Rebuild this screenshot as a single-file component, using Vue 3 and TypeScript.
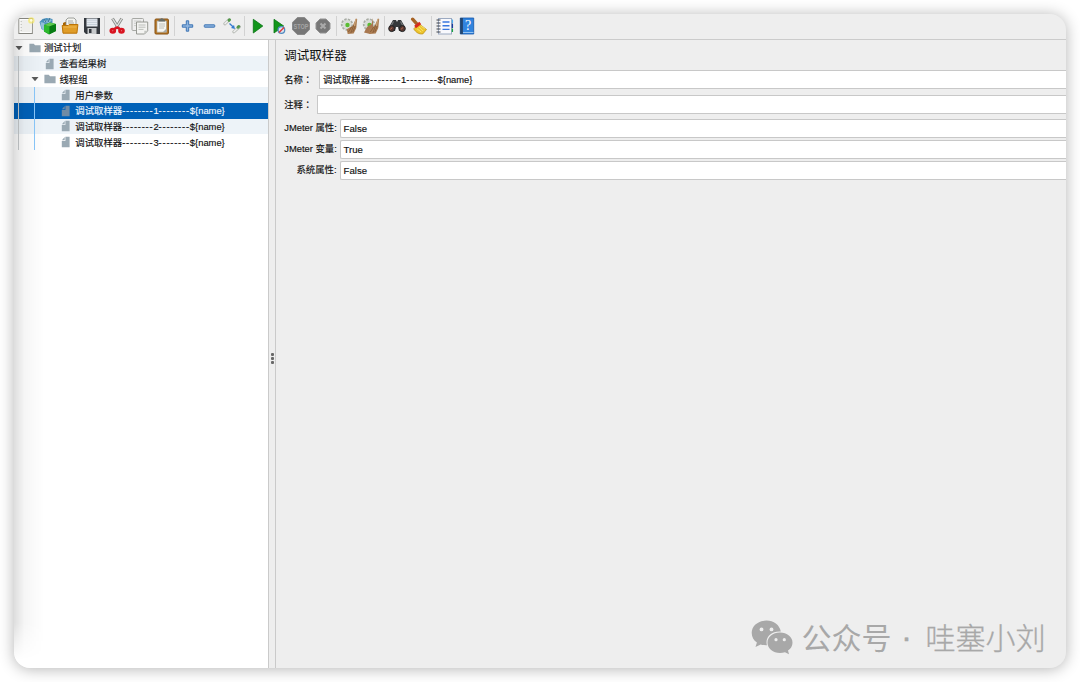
<script setup lang="ts">
interface TreeRow {
  level: number
  kind: 'folder' | 'file'
  label: string
  index?: number
  selected?: boolean
}

interface Field {
  label: string
  value: string
}

const toolbar: string[][] = [
  ['new', 'templates', 'open', 'save'],
  ['cut', 'copy', 'paste'],
  ['plus', 'minus', 'toggle'],
  ['start', 'startNoPause', 'stop', 'shutdown'],
  ['clear', 'clearAll'],
  ['search', 'broom'],
  ['functions', 'help'],
]

const rows: TreeRow[] = [
  { level: 0, kind: 'folder', label: '测试计划' },
  { level: 1, kind: 'file', label: '查看结果树' },
  { level: 1, kind: 'folder', label: '线程组' },
  { level: 2, kind: 'file', label: '用户参数' },
  { level: 2, kind: 'file', label: '调试取样器', index: 1, selected: true },
  { level: 2, kind: 'file', label: '调试取样器', index: 2 },
  { level: 2, kind: 'file', label: '调试取样器', index: 3 },
]

const options: Field[] = [
  { label: 'JMeter 属性:', value: 'False' },
  { label: 'JMeter 变量:', value: 'True' },
  { label: '系统属性:', value: 'False' },
]

const dashes = '--------'
const variable = '${name}'
</script>

<template>
  <main class="window">
    <header class="toolbar">
      <template v-for="(group, g) in toolbar" :key="g">
        <i v-if="g" class="sep"></i>
        <span v-for="name in group" :key="name" class="tool">
          <svg width="18" height="18" viewBox="0 0 18 18">
            <g v-if="name === 'new'">
              <rect x="1.9" y="1.5" width="13.4" height="15" fill="#eeeeec" stroke="#85857f" />
              <rect x="3" y="2.5" width="11.2" height="13" fill="none" stroke="#fff" stroke-width=".8" />
              <path d="M4.2 4v10" stroke="#b5b5b2" stroke-dasharray="1 2" />
              <circle cx="14.3" cy="3.4" r="3.2" fill="#f5e763" opacity=".7" />
              <circle cx="14.3" cy="3.4" r="1.3" fill="#fffce0" />
            </g>
            <g v-else-if="name === 'templates'">
              <path d="M.5 5l3-3 4-1 6 1v8l-6 5-5-3z" fill="#4c91bd" />
              <path d="M1.5 5l4 1v8l-3-3zM5 2l3 2 2-2 3 1-3 3-5-1z" fill="#92bfd8" />
              <path d="M5 2l2 3M11 1L9 5" stroke="#316c91" />
              <path d="M5 8l6-2.5L17 7v7l-7 3.5-5-3z" fill="#16941f" />
              <path d="M5 8l6-2.5L17 7l-6.5 2.5z" fill="#5fc74f" />
              <path d="M5 8l5.5 1.5v7.8l-5.5-3z" fill="#2cba2d" />
              <path d="M10.5 9.5L17 7v7l-6.5 3.3z" fill="#087c14" />
            </g>
            <g v-else-if="name === 'open'">
              <path d="M2 6l2-1h3l1 2h8v9H2z" fill="#a86300" />
              <path d="M5 9V3l2-2h6l2 2v8H5z" fill="#f3f3ef" stroke="#888b86" stroke-width=".8" />
              <path d="M7 4h5M7 6h6" stroke="#a8aaa5" />
              <path d="M1.2 8.5h6l1-1h8.7l-1 8.7H2z" fill="#e09d28" stroke="#bb7306" />
              <path d="M2.5 10h13" stroke="#efb851" />
            </g>
            <g v-else-if="name === 'save'">
              <path d="M1 1h16v16H3l-2-2z" fill="#34393f" />
              <rect x="3.5" y="1.5" width="11" height="8" fill="#e4eaf0" />
              <path d="M4 3.2h10M4 5.4h10M4 7.5h10" stroke="#b9c4cf" stroke-width=".7" />
              <rect x="4.5" y="11" width="9" height="6" fill="#c6c9cb" />
              <rect x="6" y="12" width="2.5" height="4" fill="#31363d" />
            </g>
            <g v-else-if="name === 'cut'">
              <path d="M3.5 1.5l6.2 10M12.8 1.5l-6.2 10" stroke="#878987" stroke-width="3" />
              <path d="M3.5 1.5l6.2 10M12.8 1.5l-6.2 10" stroke="#dfe1de" stroke-width="1.4" />
              <ellipse cx="3.8" cy="13.8" rx="2" ry="1.7" fill="none" stroke="#d91420" stroke-width="2.7" />
              <ellipse cx="12.5" cy="13.8" rx="2" ry="1.7" fill="none" stroke="#d91420" stroke-width="2.7" />
              <path d="M5 12.3l3.2-1.8 3.2 1.8" fill="none" stroke="#d91420" stroke-width="2.4" />
            </g>
            <g v-else-if="name === 'copy'">
              <rect x="1" y="1.5" width="11.5" height="12" rx="1" fill="#eee" stroke="#a6a8a4" />
              <path d="M3 4h7M3 6.3h7M3 8.6h7" stroke="#c3c5c1" stroke-width=".8" />
              <path d="M5.5 5h11.2v8.8l-3.2 3.2h-8z" fill="#f3f3f1" stroke="#969892" />
              <path d="M7.5 8h7M7.5 10.2h7M7.5 12.4h5" stroke="#b6b9b3" stroke-width=".9" />
              <path d="M13.3 17v-3.3h3.4z" fill="#c3c5c1" />
            </g>
            <g v-else-if="name === 'paste'">
              <rect x="2" y="2" width="13.4" height="15" rx="1" fill="#bc7b27" stroke="#855013" />
              <path d="M4 4h9.5v11.2H4z" fill="#f6f6f2" stroke="#9b9a90" stroke-width=".6" />
              <path d="M6 7h6M6 9h6M6 11h5" stroke="#b7b9b3" stroke-width=".9" />
              <path d="M5.5 4.5V2.7l2-.7c.3-1 2.3-1 2.6 0l2 .7v1.8z" fill="#686d68" />
              <path d="M10 15l3.5-3.5V15z" fill="#a8aaa5" />
            </g>
            <path v-else-if="name === 'plus'" d="M7.3 3.8h2.4v4h4v2.4h-4v4H7.3v-4h-4V7.8h4z" fill="#8db4df" stroke="#3e75b4" />
            <rect v-else-if="name === 'minus'" x="3.3" y="7.8" width="10.4" height="2.4" rx=".5" fill="#8db4df" stroke="#3e75b4" />
            <g v-else-if="name === 'toggle'">
              <path d="M1.8 6.8l4.2-4M10.8 14.8l5.6-5" stroke="#b7bbb5" stroke-width="3" stroke-linecap="round" />
              <path d="M2 6.6l4-3.8M11 14.6l5.2-4.6" stroke="#eee" stroke-width="1.5" stroke-linecap="round" />
              <path d="M6 3.3l.5-.5M15 10.2l.7-.7" stroke="#529849" stroke-width="3" stroke-linecap="round" />
              <path d="M6.5 6.6l4 3.7" stroke="#347bd1" stroke-width="1.3" />
              <path d="M12 12l-4-1 3-3z" fill="#347bd1" />
            </g>
            <path v-else-if="name === 'start'" d="M5.3 2.3L14.8 9l-9.5 7z" fill="#12961b" stroke="#087413" stroke-width=".8" />
            <g v-else-if="name === 'startNoPause'">
              <path d="M4 2.3L13.7 9 4 16z" fill="#12961b" stroke="#087413" stroke-width=".8" />
              <circle cx="11.4" cy="13" r="3.3" fill="#d9e5ef" stroke="#548bc1" stroke-width="1.3" />
              <path d="M9 15.5l5-5" stroke="#e0393c" stroke-width="1.5" />
            </g>
            <g v-else-if="name === 'stop'">
              <path d="M5.4.5h7.2l4.9 4.9v7.2l-4.9 4.9H5.4L.5 12.6V5.4z" fill="#777" stroke="#8a8a8a" />
              <text x="9" y="11.5" text-anchor="middle" textLength="15" lengthAdjust="spacingAndGlyphs" class="stop-text">STOP</text>
            </g>
            <g v-else-if="name === 'shutdown'">
              <path d="M6 2h6l4 4v6l-4 4H6l-4-4V6z" fill="#777" stroke="#929292" />
              <path d="M6.5 6.5l5 5M11.5 6.5l-5 5" stroke="#aaa" stroke-width="2.1" />
            </g>
            <g v-else-if="name === 'clear' || name === 'clearAll'">
              <circle cx="7" cy="7.5" r="4.8" fill="#d9dcd7" />
              <circle cx="7" cy="7.5" r="5.3" fill="none" stroke="#a9ada5" stroke-width="1.7" stroke-dasharray="2.4 1.2" />
              <circle cx="7.5" cy="8" r="2.2" fill="#59bd32" />
              <path v-if="name === 'clearAll'" d="M11 1l-1.5 6L5 10l-3 5.5 6 1.5 3-6z" fill="#a87850" />
              <path d="M15.9 1.5l1.3.5-.9 9-2.6 5.5-6 .4-1-4.7 6-3.4z" fill="#ac7d51" />
              <path d="M13.8 8l-3 8M11.7 10l-3.4 5M15.3 9l-2.5 6" stroke="#7d5330" stroke-width=".7" />
              <path d="M16 2l-1.7 7" stroke="#cda87d" />
            </g>
            <g v-else-if="name === 'search'">
              <path d="M5 3h3l1 2 1-2h3l4 7-1 4h-5l-1-4H8l-1 4H2l-1-4z" fill="#35383a" />
              <path d="M5.5 4.5L3 9M12.5 4.5L15 9" stroke="#74787a" stroke-width="1.2" />
              <circle cx="3.7" cy="11.6" r="3" fill="#583730" stroke="#202426" />
              <circle cx="14.3" cy="11.6" r="3" fill="#583730" stroke="#202426" />
              <path d="M2.5 12.5l1.5-2M13.2 12.5l1.5-2" stroke="#bd7355" />
            </g>
            <g v-else-if="name === 'broom'">
              <path d="M2.6 2.2l4.2 4.6" stroke="#a66324" stroke-width="3.3" stroke-linecap="round" />
              <path d="M8.7 6.5l7.8 6-3.6 4.4c-4 .6-7-1.6-9.2-5z" fill="#edc42c" stroke="#ba8c10" stroke-width=".7" />
              <path d="M4.2 8.8l5.2-4 1.8 2.4-5.3 4z" fill="#d72b1d" />
              <path d="M7.2 12l4 3M9.2 10l4 4M10.7 8.7l4 3" stroke="#f8e46d" />
            </g>
            <g v-else-if="name === 'functions'">
              <rect x="2.5" y="1.5" width="13" height="15.5" fill="#f8f9fd" stroke="#9caac1" />
              <path d="M.5 3h4M.5 6h4M.5 9h4M.5 12h4M.5 15h4" stroke="#3c4148" stroke-width="1.1" />
              <path d="M6.5 5h7M6.5 8.7h7M6.5 12.4h7" stroke="#3977de" stroke-width="1.4" />
              <path d="M16.4 2.5V6" stroke="#4aabed" stroke-width="1.3" />
              <path d="M16.4 6.5V11" stroke="#173b9d" stroke-width="1.3" />
              <path d="M16.4 11.5V15" stroke="#18a443" stroke-width="1.3" />
            </g>
            <g v-else>
              <path d="M2.3 1h13.4v16H2.3z" fill="#3184de" stroke="#1457aa" stroke-width=".8" />
              <path d="M2.2 1h2.7v16H2.2z" fill="#23466f" />
              <path d="M5 15.5h10.5" stroke="#95c3f1" />
              <text x="10.2" y="13" text-anchor="middle" class="help-text">?</text>
            </g>
          </svg>
        </span>
      </template>
    </header>

    <section class="content">
      <aside class="tree">
        <div v-for="(row, i) in rows" :key="i" class="tree-row" :class="[`level-${row.level}`, { striped: i % 2 === 1, selected: row.selected }]">
          <i v-if="i > 0" class="guide outer"></i>
          <i v-if="row.level === 2" class="guide inner"></i>
          <span class="arrow"><svg v-if="row.kind === 'folder'" width="8" height="6" viewBox="0 0 8 6"><path d="M.5 1h7L4 5.3z" fill="#5c5c5c" /></svg></span>
          <svg class="node-icon" width="12" height="12" viewBox="0 0 12 12">
            <path v-if="row.kind === 'folder'" d="M.4 1.7h4.3l1.4 1.6h5.5v7H.4z" />
            <path v-else d="M5.4.7h4.2v10.6H1.8V5h3.6zM4.7 1v3.3H1.9z" />
          </svg>
          <span class="node-label">{{ row.label }}<template v-if="row.index"><span class="dash">{{ dashes }}</span>{{ row.index }}<span class="dash">{{ dashes }}</span>{{ variable }}</template></span>
        </div>
        <i class="edge-shade"></i>
      </aside>
      <div class="divider"><i></i><i></i><i></i></div>
      <section class="panel">
        <h1>调试取样器</h1>
        <div class="text-row name-row">
          <label>名称<span class="colon" lang="zh-Hant">：</span></label>
          <div class="input">调试取样器<span class="dash">{{ dashes }}</span>1<span class="dash">{{ dashes }}</span>{{ variable }}</div>
        </div>
        <div class="text-row comment-row">
          <label>注释<span class="colon" lang="zh-Hant">：</span></label>
          <div class="input"></div>
        </div>
        <div v-for="option in options" :key="option.label" class="option-row">
          <label>{{ option.label }}</label>
          <div class="combo">{{ option.value }}</div>
        </div>
      </section>
    </section>
    <div class="watermark">
      <svg width="42" height="35" viewBox="0 0 42 35">
        <path d="M15.5.6C7 .6.7 6 .7 13c0 4 2 7.3 5.2 9.5l-1.4 4.6 5.2-2.7c2 .6 4 .9 6.2.8A12.5 12.5 0 0 1 15.5 22c0-6 5.6-10.6 12.8-10.6h1.5C28.5 5 22.7.6 15.5.6z" />
        <path d="M29 12.5c-7.2 0-12.5 4.5-12.5 10.2S22 33 29 33c1.8 0 3.4-.3 5-.8l4 2-1-3.6c2.8-1.9 4.5-4.7 4.5-7.9 0-5.7-5.5-10.2-12.5-10.2z" />
        <g fill="#eee"><circle cx="10.5" cy="9.4" r="1.9" /><circle cx="20.5" cy="9.4" r="1.9" /><circle cx="25" cy="19.7" r="1.6" /><circle cx="33.3" cy="19.7" r="1.6" /></g>
      </svg>
      <span class="account">公众号</span><span class="dot">·</span><span class="owner">哇塞小刘</span>
    </div>
  </main>
</template>

<style>
body {
  background: #fff;
  overflow: hidden;
}
#app {
  height: 682px;
  padding: 14px;
  box-sizing: border-box;
}
</style>

<style scoped>
.window {
  position: relative;
  display: flex;
  flex-direction: column;
  width: 1052px;
  height: 654px;
  overflow: hidden;
  border-radius: 16px;
  background: #eee;
  box-shadow: 0 1px 15px rgba(0, 0, 0, 0.3);
  color: #101010;
  font-family: "Liberation Sans", "Noto Sans CJK SC", sans-serif;
  font-size: 9.4px;
}
.toolbar {
  display: flex;
  flex: none;
  height: 23px;
  padding: 0 0 2px 1px;
  align-items: center;
  border-bottom: 1px solid #cbcbcb;
}
.tool {
  display: flex;
  width: 22px;
  justify-content: center;
}
.sep {
  width: 1px;
  height: 20px;
  margin: 0 1.4px;
  background: #d2d2d2;
}
.stop-text {
  font-size: 6.5px;
  font-weight: bold;
  fill: #a5a5a5;
}
.help-text {
  font-family: "Liberation Serif", serif;
  font-size: 14px;
  fill: #fff;
}
.content {
  display: flex;
  flex: 1;
}
.tree {
  position: relative;
  width: 254px;
  background: #fff;
}
.tree-row {
  position: relative;
  display: flex;
  height: 15.72px;
  align-items: center;
  white-space: nowrap;
}
.striped {
  background: #edf3f8;
}
.selected {
  background: #0061b8;
  color: #eef6fd;
}
.level-1 {
  padding-left: 15.6px;
}
.level-2 {
  padding-left: 31.4px;
}
.arrow {
  display: flex;
  flex: none;
  width: 14.5px;
  padding-left: 1px;
  box-sizing: border-box;
}
.node-icon {
  margin-right: 3.4px;
  fill: #9aa9b3;
}
.selected .node-icon {
  fill: #708ba5;
}
.node-label {
  margin-top: -1px;
}
.node-label,
.input,
.combo,
label {
  -webkit-text-stroke: 0.15px currentColor;
}
.dash {
  letter-spacing: 0.78px;
}
.colon {
  font-family: "Noto Sans CJK TC", sans-serif;
}
.guide {
  position: absolute;
  top: 0;
  bottom: 0;
  width: 1px;
}
.outer {
  left: 4px;
  background: #c8ccce;
}
.inner {
  left: 20px;
  background: #8ac8fa;
}
.edge-shade {
  position: absolute;
  top: 0;
  bottom: 8px;
  left: 0;
  width: 30px;
  background: linear-gradient(90deg, rgba(0, 0, 0, 0.13), rgba(0, 0, 0, 0.035) 35%, transparent);
  mask-image: linear-gradient(#000 0 94%, transparent);
}
.divider {
  display: flex;
  flex: none;
  flex-direction: column;
  width: 8px;
  align-items: center;
  justify-content: center;
  gap: 1px;
  padding-top: 8px;
  box-sizing: border-box;
  border-right: 1px solid #cacaca;
  border-left: 1px solid #cacaca;
}
.divider i {
  width: 3px;
  height: 3px;
  border-radius: 1px;
  background: #686868;
}
.panel {
  flex: 1;
  padding-left: 8.2px;
}
h1 {
  height: 18px;
  margin: 7px 0 5px;
  font-size: 12.5px;
  font-weight: 400;
  line-height: 18px;
}
.text-row,
.option-row {
  display: flex;
  align-items: center;
}
.text-row {
  height: 19px;
  margin-bottom: 6px;
}
.comment-row {
  margin-bottom: 5px;
}
label {
  padding-bottom: 1px;
  line-height: 14px;
}
.text-row label {
  width: 34.8px;
}
.comment-row label {
  width: 33.2px;
}
.input,
.combo {
  flex: 1;
  height: 19px;
  padding-left: 3px;
  box-sizing: border-box;
  border: 1px solid #c8c8c8;
  border-right: 0;
  background: #fff;
  line-height: 17px;
}
.option-row {
  height: 19px;
  margin-bottom: 2px;
}
.option-row label {
  width: 52.3px;
  margin-right: 3.1px;
  text-align: right;
  white-space: nowrap;
}
.combo {
  border-radius: 2px 0 0 2px;
  font-size: 9.6px;
}
.watermark {
  position: absolute;
  right: 20.5px;
  bottom: 11px;
  display: flex;
  height: 40px;
  align-items: center;
  color: #a8a8a8;
  font-family: "Noto Sans CJK SC", sans-serif;
  font-size: 30px;
  line-height: 40px;
}
.watermark svg {
  margin-right: 9px;
  fill: #a8a8a8;
}
.account,
.owner {
  position: relative;
  top: -1px;
}
.dot {
  width: 34px;
  padding-right: 4px;
  box-sizing: border-box;
  text-align: center;
  font-family: "Liberation Sans", sans-serif;
  -webkit-text-stroke: 0.7px currentColor;
}
.owner {
  font-weight: 300;
  -webkit-text-stroke: 0.3px currentColor;
}
</style>
